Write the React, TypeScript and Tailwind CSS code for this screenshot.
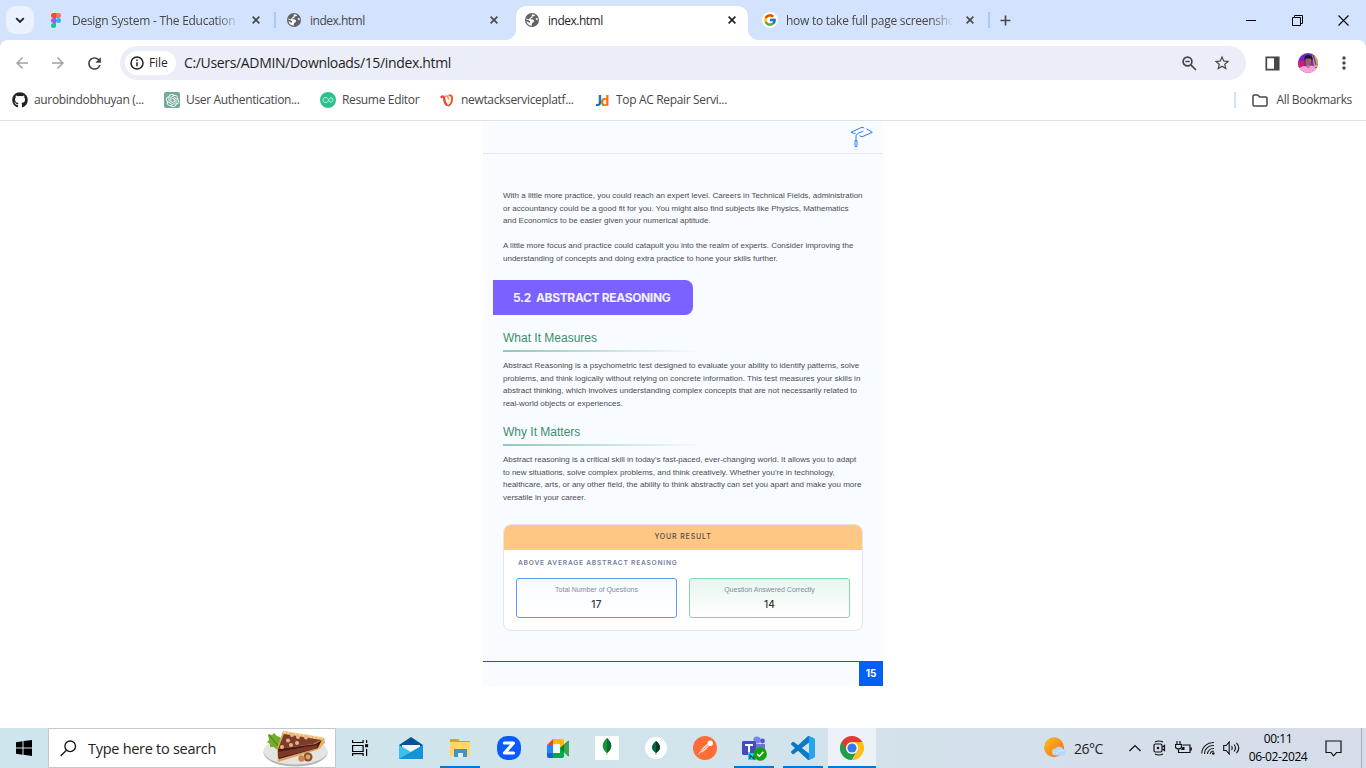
import type { ReactNode } from "react";
import { MdArrowBack, MdArrowForward, MdRefresh, MdStarOutline, MdMoreVert } from "react-icons/md";
import { FaGithub } from "react-icons/fa";
import { FcGoogle } from "react-icons/fc";
import { SiOpenai } from "react-icons/si";

const Globe = () => (
  <svg width="14" height="14" viewBox="0 0 14 14">
    <circle cx="7" cy="7" r="7" fill="#5f6368" />
    <path d="M7.500 1.300 10 2 9.600 3 7.500 3.600 7.300 4.900 5.500 5.300 5.600 6.300 8.100 6.500 9.200 8 8.300 9.500 7.200 9.800 6.600 12.700A5.700 5.700 0 0 1 1.400 8L3.800 9.400 5 9.500 5.300 8.200 3 6.900 1.500 6.800 1.600 5.500 2.200 4.500ZM10.500 5.200 12.500 5 12.700 7.200 11.400 7.100Z" fill="#fff" />
    <path d="M1.500 5.500 3.500 2 7 1.200 6.500 3.300 5 5 3.500 6.500Z" fill="#5f6368" />
  </svg>
);

const Figma = () => (
  <svg width="10" height="15" viewBox="0 0 10 15">
    <path d="M5 0H2.5a2.5 2.5 0 0 0 0 5H5Z" fill="#f24e1e" />
    <path d="M5 0h2.5a2.5 2.5 0 0 1 0 5H5Z" fill="#ff7262" />
    <path d="M5 5H2.5a2.5 2.5 0 0 0 0 5H5Z" fill="#a259ff" />
    <circle cx="7.5" cy="7.5" r="2.5" fill="#1abcfe" />
    <path d="M5 10H2.5A2.5 2.5 0 1 0 5 12.5Z" fill="#0acf83" />
  </svg>
);

function Tab({ icon, title, active, fade, divider }: { icon: ReactNode; title: string; active?: boolean; fade?: boolean; divider?: boolean }) {
  return (
    <div className={`relative mr-1.5 flex h-[34px] w-[232px] shrink-0 items-center rounded-t-[10px] ${active ? "bg-white" : ""}`}>
      {active && (
        <>
          <span className="absolute bottom-0 -left-[10px] size-[10px] bg-[radial-gradient(circle_at_0_0,transparent_9.5px,#fff_10px)]" />
          <span className="absolute bottom-0 -right-[10px] size-[10px] bg-[radial-gradient(circle_at_100%_0,transparent_9.5px,#fff_10px)]" />
        </>
      )}
      <span className="-mt-1.5 flex w-8 shrink-0 justify-center">{icon}</span>
      <span className={`-mt-1 w-[167px] shrink-0 overflow-hidden text-[12px] whitespace-nowrap ${active ? "text-[#1f1f1f]" : "text-[#474747]"} ${fade ? "tracking-[-0.27px] [mask-image:linear-gradient(to_right,#000_145px,transparent_168px)]" : "tracking-[-0.5px]"}`}>{title}</span>
      <span className="-mt-1.5 ml-[13px] shrink-0"><svg width="8" height="8" stroke={active ? "#1f1f1f" : "#474747"} strokeWidth="1.6"><path d="m.6.6 6.8 6.8m0-6.8L.6 7.400" /></svg></span>
      {divider && <span className="absolute top-1.5 left-[234px] h-4 w-0.5 bg-[#a8c7fa]" />}
    </div>
  );
}

function Bookmark({ icon, label, className }: { icon: ReactNode; label: string; className: string }) {
  return (
    <div className={`flex shrink-0 items-center gap-1.5 ${className}`}>
      <span className="flex w-4 justify-center">{icon}</span>
      <span className="whitespace-nowrap">{label}</span>
    </div>
  );
}

function Browser() {
  return (
    <header className="bg-[#d3e3fd]">
      <div className="flex h-10 items-start pt-1.5 pl-1.5">
        <button className="mr-1.5 flex size-7 items-center justify-center rounded-[9px] bg-[#ebf1fe]"><svg width="10" height="7" fill="none" stroke="#1f1f1f" strokeWidth="1.8"><path d="m1.200 1.200 3.800 3.800 3.800-3.800" /></svg></button>
        <Tab icon={<Figma />} title="Design System - The Education" fade divider />
        <Tab icon={<Globe />} title="index.html" />
        <Tab icon={<Globe />} title="index.html" active />
        <Tab icon={<span className="flex size-4 items-center justify-center rounded-full bg-white"><FcGoogle size={14} /></span>} title="how to take full page screensho" fade divider />
        <span className="flex h-7 w-[27px] items-center justify-center"><svg width="11" height="11" stroke="#474747" strokeWidth="1.6"><path d="M.5 5.500h10m-5-5v10" /></svg></span>
        <div className="ml-auto flex h-7 items-center">
          <span className="flex w-[46px] justify-center"><svg width="10" height="10"><path d="M0 5.5h10" stroke="#000" /></svg></span>
          <span className="flex w-[46px] justify-center"><svg width="11" height="11" fill="none" stroke="#000"><path d="M.5 2.5h8v8h-8zM2.5 2.5v-2h8v8h-2" /></svg></span>
          <span className="flex w-[46px] justify-center"><svg width="11" height="11" stroke="#000" strokeWidth="1.1"><path d="m.5.5 10 10m0-10-10 10" /></svg></span>
        </div>
      </div>
      <div className="rounded-t-lg bg-white">
        <div className="flex h-[46px] items-center pl-1">
          <span className="flex w-9 justify-center"><MdArrowBack size={18} color="#a3a3a3" /></span>
          <span className="flex w-9 justify-center"><MdArrowForward size={18} color="#a3a3a3" /></span>
          <span className="flex w-9 justify-center"><MdRefresh size={19} color="#3f3f3f" /></span>
          <div className="ml-2 flex h-[34px] w-[1126px] shrink-0 items-center rounded-full bg-[#ebeef8] pl-[5px]">
            <span className="flex h-6 w-[51px] items-center gap-[5px] rounded-full bg-white pl-[5px] text-[12px] font-medium tracking-[-0.1px] text-[#1f1f1f]">
              <svg width="14" height="14" fill="none" stroke="#1f1f1f" strokeWidth="1.5"><circle cx="7" cy="7" r="6" /><path d="M7 6.2v4M7 3.6v1.5" /></svg>
              File
            </span>
            <span className="-mt-px ml-2 text-[14px] tracking-[-0.34px] text-[#1f1f1f]">C:/Users/ADMIN/Downloads/15/index.html</span>
            <span className="mr-[15px] ml-auto flex items-center gap-4">
              <svg width="15" height="15" fill="none" stroke="#474747" strokeWidth="1.7"><circle cx="5.5" cy="5.5" r="4.4" /><path d="m8.8 8.8 5.2 5.2M3.4 5.5h4.2" /></svg>
              <MdStarOutline size={18} color="#474747" />
            </span>
          </div>
          <span className="flex w-[52px] shrink-0 justify-center"><svg width="15" height="15"><path d="M1.3 1.3h12.400v12.400H1.3z" fill="none" stroke="#474747" strokeWidth="1.7" /><path d="M9 1h5v13H9z" fill="#474747" /></svg></span>
          <svg className="shrink-0" width="20" height="20" viewBox="0 0 20 20">
            <defs><clipPath id="avatar"><circle cx="10" cy="10" r="10" /></clipPath></defs>
            <g clipPath="url(#avatar)"><path d="M0 0h20v20H0z" fill="#7427b5" /><path d="M14 0h6v14h-4z" fill="#e0ac52" /><path d="M0 8h6v6H0z" fill="#d11f6c" /><path d="m15 1 3 11" stroke="#6138b5" strokeWidth="1.3" /><path d="M0 20Q1 12.500 7 13l3 1 3-1.500q5 0 7 7.500Z" fill="#ff9fdb" /><path d="M8.500 11h3.500v3l-1.700 1.500L8.500 14Z" fill="#c17c80" /><ellipse cx="10.300" cy="8.200" rx="2.800" ry="4.200" fill="#a05f5f" /><path d="M6.500 7.500q-1-5.500 3.700-5.500t4.300 5.500L12.500 5.500H8Z" fill="#1b1430" /></g>
          </svg>
          <span className="flex w-12 shrink-0 justify-center pl-1"><MdMoreVert size={20} color="#474747" /></span>
        </div>
        <div className="flex h-[35px] items-center border-b border-[#dfe1e5] pb-[6px] pl-3 text-[12px] tracking-[-0.34px] text-[#474747]">
          <Bookmark className="w-[152px]" icon={<FaGithub size={16} color="#1f2328" />} label="aurobindobhuyan (..." />
          <Bookmark className="w-[156px]" icon={<span className="flex size-4 items-center justify-center rounded-xs bg-[#74aa9c]"><SiOpenai size={13} color="#fff" /></span>} label="User Authentication..." />
          <Bookmark className="w-[119px]" icon={<svg width="16" height="16" fill="none"><circle cx="8" cy="8" r="8" fill="#2dc08d" /><path d="M8 6.800C6.500 4.600 3 5.500 3 8s3.500 3.400 5 1.200L9.200 7Q10.500 5 12.300 6.200c1.600 1.500.3 4.300-1.800 3.900L9 9.500" stroke="#d7fff0" strokeWidth=".9" /></svg>} label="Resume Editor" />
          <Bookmark className="w-[155px]" icon={<svg width="14" height="13" fill="none" strokeLinecap="round"><path d="M1.5 3Q4 1.5 4.2 5t2.500 6" stroke="#f04438" strokeWidth="2.4" /><path d="M5.2 2.4Q8 .6 8.400 5" stroke="#ff8a3d" strokeWidth="1.400" /><path d="M9.500 1.300Q12.800 1.500 12 6q-.5 4-3.200 5.500" stroke="#f05a28" strokeWidth="2" /></svg>} label="newtackserviceplatf..." />
          <Bookmark className="w-[150px]" icon={<span className="font-['Lato'] text-[15px] leading-none font-black tracking-[-0.8px] text-[#0076bd]">J<span className="text-[#ff6c00]">d</span></span>} label="Top AC Repair Servi..." />
          <span className="mr-4 ml-auto h-4 w-0.5 bg-[#d3e3fd]" />
          <Bookmark className="mr-[14px] gap-2" icon={<svg width="16" height="13" fill="none" stroke="#474747" strokeWidth="1.5"><path d="M1 2.2Q1 1 2.2 1h3.5l2 2h6Q15 3 15 4.2v6.5q0 1.3-1.3 1.3H2.3Q1 12 1 10.7Z" /></svg>} label="All Bookmarks" />
        </div>
      </div>
    </header>
  );
}

function SectionTitle({ children }: { children: ReactNode }) {
  return (
    <>
      <h2 className="h-[19px] text-[12px] leading-[14px] text-[#3c8f6a]">{children}</h2>
      <div className="h-0.5 w-[200px] bg-linear-to-r from-[#92c9b3] to-transparent" />
    </>
  );
}

function Report() {
  return (
    <main className="mx-auto h-[565px] w-[400px] bg-[#f8fbff] font-['Liberation_Sans',sans-serif] text-[8px] leading-[12.6px] text-[#4b4b50]">
      <div className="flex h-[33px] justify-end border-b border-[#e4e8ee] pt-[5px] pr-[10px]">
        <svg width="23" height="23" viewBox="0 0 23 23" fill="none" stroke="#2f7deb">
          <path d="M5.500 7.800 1 6.300 12 1.200l2.300.9M16.500 2.800l5.800 3.500L12 10.800 9.500 9.700M6 14V9.300Q8 6.500 13.300 5.300M5 14.500h2v6H5Z" />
        </svg>
      </div>
      <div className="px-5">
        <div className="pt-9">
          <p className="h-[50px] whitespace-nowrap">With a little more practice, you could reach an expert level. Careers in Technical Fields, administration<br />or accountancy could be a good fit for you. You might also find subjects like Physics, Mathematics<br />and Economics to be easier given your numerical aptitude.</p>
          <p className="h-10 whitespace-nowrap">A little more focus and practice could catapult you into the realm of experts. Consider improving the<br />understanding of concepts and doing extra practice to hone your skills further.</p>
        </div>
        <div className="-ml-2.5 flex h-[35px] w-[200px] items-center rounded-r-lg bg-[#7b61ff] pt-px pl-5 font-['Inter',sans-serif] text-[12px] font-bold tracking-[-0.34px] whitespace-pre text-[#f3f0ff]">5.2  ABSTRACT REASONING</div>
        <div className="pt-4">
          <SectionTitle>What It Measures</SectionTitle>
          <p className="h-[73px] pt-2 whitespace-nowrap">Abstract Reasoning is a psychometric test designed to evaluate your ability to identify patterns, solve<br />problems, and think logically without relying on concrete information. This test measures your skills in<br />abstract thinking, which involves understanding complex concepts that are not necessarily related to<br />real-world objects or experiences.</p>
          <SectionTitle>Why It Matters</SectionTitle>
          <p className="h-[78px] pt-2 whitespace-nowrap">Abstract reasoning is a critical skill in today's fast-paced, ever-changing world. It allows you to adapt<br />to new situations, solve complex problems, and think creatively. Whether you're in technology,<br />healthcare, arts, or any other field, the ability to think abstractly can set you apart and make you more<br />versatile in your career.</p>
        </div>
        <section className="h-[107px] overflow-hidden rounded-lg border border-[#e2e5eb] bg-white font-['Inter',sans-serif]">
          <div className="flex h-[25px] items-center justify-center bg-[#ffc684] text-[7px] font-medium tracking-[0.85px]">YOUR RESULT</div>
          <h3 className="h-[28px] pt-[7px] pl-3.5 text-[6.7px] font-semibold tracking-[0.75px] text-[#77809c]">ABOVE AVERAGE ABSTRACT REASONING</h3>
          <div className="flex gap-3 px-3">
            <div className="h-10 flex-1 rounded-[3px] border border-[#5e9bf0] bg-linear-to-b from-[#f8fbff] to-white pt-[5px] text-center">
              <div className="font-['Liberation_Sans',sans-serif] text-[7px] leading-[12px] text-[#858b9b]">Total Number of Questions</div>
              <div className="text-[10px] leading-[17px] font-medium tracking-[0.2px] text-[#333]">17</div>
            </div>
            <div className="h-10 flex-1 rounded-[3px] border border-[#8ad3ac] bg-linear-to-b from-[#e6f6ee] to-white pt-[5px] text-center">
              <div className="font-['Liberation_Sans',sans-serif] text-[7px] leading-[12px] text-[#858b9b]">Question Answered Correctly</div>
              <div className="text-[10px] leading-[17px] font-medium tracking-[0.2px] text-[#333]">14</div>
            </div>
          </div>
        </section>
      </div>
      <footer className="mt-[30px] flex h-[25px] justify-end border-t border-[#0061e0] font-['Inter',sans-serif]">
        <span className="-mt-px flex h-[25px] w-6 items-center justify-center bg-[#0061f2] text-[10px] font-bold text-white">15</span>
      </footer>
    </main>
  );
}

function TaskbarApp({ children, open, active }: { children: ReactNode; open?: boolean; active?: boolean }) {
  return (
    <div className={`flex h-10 w-12 flex-col items-center justify-between ${active ? "bg-[#edf2f9]" : ""}`}>
      <span className="flex h-[38px] items-center pt-0.5">{children}</span>
      {open && <span className={`h-0.5 bg-[#0078d7] ${active ? "w-12" : "w-10"}`} />}
    </div>
  );
}

const Cake = () => (
  <svg width="66" height="37" viewBox="0 0 66 37">
    <ellipse cx="32.500" cy="22.500" rx="32" ry="14" fill="#b3b5ba" />
    <ellipse cx="32.500" cy="21" rx="32" ry="13.500" fill="#e6e4e1" />
    <path d="m5 4 4 1 2-2 3 3 3 1 2 3-1 10-5-1-2-2-4 0 0-3-3-2 2-2Z" fill="#72ae2b" /><path d="m6 5 11 13" stroke="#3f7818" />
    <path d="M20 1 61 8 62 13 54 20 15 32 14 18Z" fill="#dda45c" />
    <path d="M21 4 58 10 50 14 15 19Z" fill="#7b3d2b" />
    <path d="m15 19 37-5 7-4-4 8-39 11Z" fill="#4f1c13" />
    <path d="m15 22 39-7v3l-39 10Z" fill="#7a3a2a" />
    <path d="m20 2 40 6.500" fill="none" stroke="#f4ce8e" strokeWidth="2.600" strokeDasharray="3 .8" />
    <path d="m61 9-5 10" stroke="#eab66f" strokeWidth="2.400" />
    <g fill="#eab28b">{[[29, 5], [35, 7], [43, 7.500], [25, 10.500], [34, 13], [19, 17], [28, 15]].map(([x, y]) => <circle key={`${x}-${y}`} cx={x} cy={y} r="2" />)}</g>
    <circle cx="45" cy="27" r="4.500" fill="#8c4e27" /><circle cx="45" cy="27" r="2.400" fill="#dba46d" /><circle cx="38.500" cy="28.500" r="3.200" fill="#c78551" />
  </svg>
);

function Taskbar() {
  return (
    <footer className="flex h-10 items-center bg-linear-to-r from-[#cde5ec] via-[#d2e4ec] via-50% to-[#d6dcea] text-black">
      <span className="flex w-12 justify-center"><svg width="16" height="16"><path d="M0 2.2 6.5 1.3v6.2H0ZM7.5 1.1 16 0v7.5H7.5ZM0 8.5h6.5v6.2L0 13.8ZM7.5 8.5H16V16l-8.5-1.2Z" /></svg></span>
      <div className="flex h-10 w-72 items-center border border-[#c4c8ca] bg-white pl-[11px] text-[14.5px]">
        <svg width="17" height="17" fill="none" stroke="#111" strokeWidth="1.3"><circle cx="10.2" cy="6.3" r="5.3" /><path d="m6.4 10.2-5.7 5.8" /></svg>
        <span className="ml-[11px] pt-px tracking-[-0.28px] text-[#222]">Type here to search</span>
        <span className="mr-1.5 ml-auto"><Cake /></span>
      </div>
      <span className="flex w-[51px] justify-start pl-4"><svg width="17" height="16" fill="none" stroke="#000" strokeWidth="1.2"><path d="M.6 0v2.5h10.5V0M.6 5.5h10.5v6H.6zM.6 16v-2.3h10.5V16M14.6 0v3M14.6 9v7" /><path d="M13.1 4.2h3v3h-3z" fill="#000" stroke="none" /></svg></span>
      <div className="flex gap-px">
        <TaskbarApp><svg width="24" height="24"><path d="M0 9 12 1l12 8v5H0Z" fill="#075293" /><path d="M3 9h18v8H3Z" fill="#f2f4f8" /><path d="m0 9 12 7 12-7v14H0Z" fill="#39c0f2" /><path d="m0 23 12-7 12-7v14Z" fill="#1593d5" /></svg></TaskbarApp>
        <TaskbarApp open><svg width="22" height="20"><path d="M1 1h8l2 2h10v15H1Z" fill="#e0a11b" /><path d="M1 4h20v14H1Z" fill="#ffd766" /><path d="M5 11h13v8h-4v-4H9v4H5Z" fill="#3e93ce" /><path d="M9 15h5v4H9Z" fill="#e8edf0" /></svg></TaskbarApp>
        <TaskbarApp><svg width="24" height="24"><rect width="24" height="24" rx="10" fill="#0b5cff" /><path d="M7.500 7h9L7.500 17h9" fill="none" stroke="#fff" strokeWidth="3.2" strokeLinejoin="round" strokeLinecap="round" /></svg></TaskbarApp>
        <TaskbarApp><svg width="23" height="19"><path d="M0 6 6 0v6Z" fill="#ea4335" /><path d="M0 6h6v8H0Z" fill="#2684fc" /><path d="M0 14h6v5H2q-2 0-2-2Z" fill="#0066da" /><path d="M6 0h9q2 0 2 2v6l-4 2V5H6Z" fill="#ffba00" /><path d="M6 14h7V9h4v8q0 2-2 2H6Z" fill="#00ac47" /><path d="m13 9 8-7q1-1 1 1v13q0 2-1 1Z" fill="#00832d" /><path d="m17 6 5-4v15l-5-4Z" fill="#3ba754" /><path d="M6 5h7v9H6Z" fill="#f2f7fa" /></svg></TaskbarApp>
        <TaskbarApp><svg width="24" height="24"><path d="M0 0h24v24H0Z" fill="#fff" /><path d="M12 2q-8.500 8-.3 15V19h.5v-2Q20.500 10 12 2Z" fill="#18933a" /><path d="M12 2v15q8.500-7 0-15Z" fill="#0b6c31" /></svg></TaskbarApp>
        <TaskbarApp><svg width="22" height="22"><circle cx="11" cy="11" r="11" fill="#fff" /><path d="M11 4q-8 6.500-.3 12v2h.5v-2Q19 10.500 11 4Z" fill="#00684a" /><path d="M11 4v12q8-5.500 0-12Z" fill="#023b2c" /></svg></TaskbarApp>
        <TaskbarApp><svg width="24" height="24"><circle cx="12" cy="12" r="12" fill="#ff6c37" /><path d="m5 18.5 5-7 4-3.5 2 2-3.6 4-6.5 4.7Z" fill="#ffe6dc" /><path d="m8 15.5 7-6" stroke="#ff6c37" strokeWidth=".7" /><circle cx="17.2" cy="7.2" r="2.7" fill="#fff" /><path d="m6.5 17.8 2-1.3" stroke="#d34d1e" /></svg></TaskbarApp>
        <TaskbarApp open><svg width="26" height="25"><circle cx="16" cy="4" r="3.6" fill="#7b83eb" /><circle cx="21.5" cy="5" r="2.4" fill="#5059c9" /><path d="M11 8h13v8q0 6-6 6t-7-6Z" fill="#6c74dc" /><rect x="1" y="5" width="14" height="14" rx="1.4" fill="#434cbd" /><path d="M4 9h8M8 9v7.5" stroke="#fff" strokeWidth="2" /><path d="M7 17h8v7H7Z" fill="#20d3df" /><path d="M9 23v-4l4 4v-4" fill="none" stroke="#0a5360" strokeWidth="1.3" /><circle cx="19.2" cy="18" r="6.7" fill="#13a10e" /><path d="m16 18 2.3 2.2 4-4.3" fill="none" stroke="#fff" strokeWidth="1.6" /></svg></TaskbarApp>
        <TaskbarApp open><svg width="24" height="24" viewBox="0 0 24 24"><path d="M23.15 2.587L18.21.21a1.494 1.494 0 0 0-1.705.29l-9.46 8.63-4.12-3.128a.999.999 0 0 0-1.276.057L.327 7.261A1 1 0 0 0 .326 8.74L3.899 12 .326 15.26a1 1 0 0 0 .001 1.479L1.65 17.94a.999.999 0 0 0 1.276.057l4.12-3.128 9.46 8.63a1.492 1.492 0 0 0 1.704.29l4.942-2.377A1.5 1.5 0 0 0 24 20.06V3.939a1.5 1.5 0 0 0-.85-1.352zm-5.146 14.861L10.826 12l7.178-5.448v10.896z" fill="#0a78c4" /><path d="M18 .1 24 3v18l-6 2.9Z" fill="#25a5ef" /></svg></TaskbarApp>
        <TaskbarApp open active><svg width="24" height="24"><path d="M12 12 1.6 6a12 12 0 0 0 10.4 18l5-9Z" fill="#1e9f4a" /><path d="M12 12 17.2 15 12 24A12 12 0 0 0 22.4 6H12Z" fill="#fbc116" /><path d="M1.6 6A12 12 0 0 1 22.4 6H12L7 15Z" fill="#e33b2e" /><circle cx="12" cy="12" r="6" fill="#fff" /><circle cx="12" cy="12" r="4.6" fill="#3479e8" /></svg></TaskbarApp>
      </div>
      <svg className="ml-[168px]" width="22" height="22"><defs><linearGradient id="sun" x2="1" y2="1"><stop stopColor="#ffbd22" /><stop offset="1" stopColor="#ef6b16" /></linearGradient></defs><circle cx="10" cy="10.3" r="10" fill="url(#sun)" /><path d="M11.5 18.5a3.5 3.5 0 0 1 0-7 4.5 4.5 0 0 1 8 1.5 2.8 2.8 0 0 1-.5 5.5Z" fill="#b7d8fb" /><path d="M12 17q3-5 8-3" fill="none" stroke="#dcecff" /></svg>
      <span className="ml-2 w-[52px] text-[14px] tracking-[-0.5px] whitespace-nowrap text-[#222]">26°C</span>
      <svg className="mr-[11px] ml-0.5" width="14" height="10" fill="none" stroke="#111" strokeWidth="1.2"><path d="m1.5 8 5.5-5.500L12.500 8" /></svg>
      <svg className="mr-[9px]" width="13" height="16" fill="none" stroke="#111" strokeWidth="1.2"><path d="M2 2Q6 0 10 2M2 14q4 2 8 0" /><rect x="1" y="4" width="8" height="8" rx="1.5" /><path d="m9.500 7 2-1.500v5l-2-1.500" /><circle cx="5" cy="8" r=".7" fill="#111" /></svg>
      <svg className="mr-[9px]" width="17" height="14" fill="none" stroke="#111" strokeWidth="1.2"><path d="M2 0v3M5 0v3M.5 3.500h6v3q-3 3-6 0ZM3.500 8v3.500H15V4H7.500M16.300 6.500v3" /><path d="M6 9h3.500V6h-2Z" fill="#111" stroke="none" /></svg>
      <svg className="mr-2" width="14" height="14" fill="none" stroke="#222" strokeWidth="1.1"><path d="M.7 12.500A11.500 11.500 0 0 1 13 1.500M3.500 13A8.500 8.500 0 0 1 13 4.500M6.400 13A6 6 0 0 1 13 7.500M9.200 13A3.400 3.400 0 0 1 13 10.300" /><circle cx="12.300" cy="12.500" r="1.2" fill="#111" stroke="none" /></svg>
      <svg width="17" height="14" fill="none" stroke="#111" strokeWidth="1.1"><path d="M.7 4.500h2.500l3-3.500v12l-3-3.500H.7ZM8.500 5q1.500 2 0 4M11 3.500q3 3.500 0 7M13.500 1.800q4.500 5.200 0 10.400" /></svg>
      <div className="ml-[5px] w-[66px] text-center text-[12px] leading-[18px] tracking-[-0.4px] whitespace-nowrap">00:11<br />06-02-2024</div>
      <svg className="ml-[14px]" width="17" height="17" fill="none" stroke="#111" strokeWidth="1.2"><path d="M1 1h15v11.500h-4.500L8.500 15.800 6 12.500H1Z" /></svg>
      <span className="mr-1 ml-auto h-10 w-px bg-[#aab0bb]" />
    </footer>
  );
}

export default function App() {
  return (
    <div className="flex h-[768px] w-[1366px] flex-col overflow-hidden bg-white font-['Open_Sans',sans-serif]">
      <Browser />
      <div className="flex-1"><Report /></div>
      <Taskbar />
    </div>
  );
}
